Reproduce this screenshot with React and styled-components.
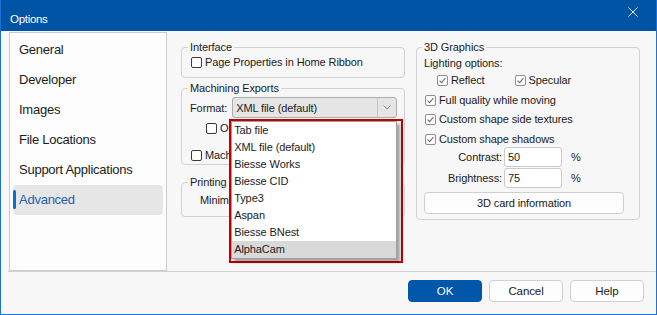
import styled, { createGlobalStyle } from "styled-components";

const GlobalStyle = createGlobalStyle`
  html, body {
    margin: 0;
    padding: 0;
    background: #f7f7f7;
  }
`;

const navItems = [
  "General",
  "Developer",
  "Images",
  "File Locations",
  "Support Applications",
  "Advanced",
];

const formats = [
  "Tab file",
  "XML file (default)",
  "Biesse Works",
  "Biesse CID",
  "Type3",
  "Aspan",
  "Biesse BNest",
  "AlphaCam",
];

function Check({ checked, muted }) {
  return (
    <Box muted={muted}>
      {checked && (
        <svg width="9" height="9" viewBox="0 0 9 9">
          <path d="M1.6 4.6 L3.6 6.6 L7.4 2.2" fill="none" stroke="#6e6e6e" strokeWidth="1.1" />
        </svg>
      )}
    </Box>
  );
}

function App() {
  return (
    <>
      <GlobalStyle />
      <Window>
        <TitleBar>
          <Title>Options</Title>
          <Close>
            <svg width="10" height="10" viewBox="0 0 10 10">
              <path d="M0.5 0.5 L9.5 9.5 M9.5 0.5 L0.5 9.5" stroke="#dce8f6" strokeWidth="1" />
            </svg>
          </Close>
        </TitleBar>

        <Body>
          <Nav>
            {navItems.map((item) => (
              <NavItem key={item} active={item === "Advanced"}>
                {item}
              </NavItem>
            ))}
          </Nav>

          <Content>
            <Column>
              <Group pad="1px 8px 8px">
                <Legend>Interface</Legend>
                <CheckRow indent={1}>
                  <Check />
                  Page Properties in Home Ribbon
                </CheckRow>
              </Group>

              <Group pad="2px 8px 2px" top={3}>
                <Legend>Machining Exports</Legend>
                <FormatRow>
                  <span>Format:</span>
                  <SelectWrap>
                    <Select>
                      <span>XML file (default)</span>
                      <Arrow>
                        <svg width="8" height="5" viewBox="0 0 8 5">
                          <path d="M0.5 0.5 L4 4 L7.5 0.5" fill="none" stroke="#8a8a8a" strokeWidth="1" />
                        </svg>
                      </Arrow>
                    </Select>
                    <Highlight>
                      <List>
                        {formats.map((f) => (
                          <ListItem key={f} hover={f === "AlphaCam"}>
                            {f}
                          </ListItem>
                        ))}
                      </List>
                    </Highlight>
                  </SelectWrap>
                </FormatRow>
                <CheckRow indent={16} top={3}>
                  <Check />
                  Output parts
                </CheckRow>
                <CheckRow indent={1} top={13}>
                  <Check />
                  Machining
                </CheckRow>
              </Group>

              <Group pad="4px 8px 9px" top={10}>
                <Legend>Printing</Legend>
                <CheckRow indent={10}>Minimum</CheckRow>
              </Group>
            </Column>

            <Column>
              <Group pad="2px 7px 5px">
                <Legend>3D Graphics</Legend>
                <CheckRow>Lighting options:</CheckRow>
                <Pair>
                  <CheckRow indent={13} top={3}>
                    <Check checked muted />
                    Reflect
                  </CheckRow>
                  <CheckRow indent={30} top={3}>
                    <Check checked muted />
                    Specular
                  </CheckRow>
                </Pair>
                <CheckRow indent={1} top={6}>
                  <Check checked muted />
                  Full quality while moving
                </CheckRow>
                <CheckRow indent={1} top={5}>
                  <Check checked muted />
                  Custom shape side textures
                </CheckRow>
                <CheckRow indent={1} top={6}>
                  <Check checked muted />
                  Custom shape shadows
                </CheckRow>
                <FieldRow top={1}>
                  <FieldLabel>Contrast:</FieldLabel>
                  <Input>50</Input>
                  <Unit>%</Unit>
                </FieldRow>
                <FieldRow top={1}>
                  <FieldLabel>Brightness:</FieldLabel>
                  <Input>75</Input>
                  <Unit>%</Unit>
                </FieldRow>
                <WideButton>3D card information</WideButton>
              </Group>
            </Column>
          </Content>
        </Body>

        <Footer>
          <Button primary>OK</Button>
          <Button>Cancel</Button>
          <Button>Help</Button>
        </Footer>
      </Window>
    </>
  );
}

export default App;

const Window = styled.div`
  width: 657px;
  height: 315px;
  box-sizing: border-box;
  border: 1px solid #1b72d4;
  border-top: none;
  background: #f7f7f7;
  display: flex;
  flex-direction: column;
  font-family: "Liberation Sans", Arial, sans-serif;
  font-size: 11px;
  letter-spacing: -0.1px;
  color: #1b1b1b;
  overflow: hidden;
`;

const TitleBar = styled.div`
  height: 31px;
  flex: none;
  box-sizing: border-box;
  background: #0054a6;
  display: flex;
  justify-content: space-between;
  padding: 0 18px 0 9px;
  color: #ffffff;
`;

const Title = styled.div`
  font-size: 11.5px;
  letter-spacing: -0.3px;
  line-height: 14px;
  margin-top: 12px;
`;

const Close = styled.div`
  margin-top: 7px;
  height: 10px;
`;

const Body = styled.div`
  height: 240px;
  flex: none;
  box-sizing: border-box;
  padding: 1px 0 0 8px;
  display: flex;
`;

const Nav = styled.div`
  width: 158px;
  height: 239px;
  box-sizing: border-box;
  border: 1px solid #cccccc;
  background: #fdfdfd;
  padding: 2px 3px;
  font-size: 13px;
  letter-spacing: -0.25px;
`;

const NavItem = styled.div`
  position: relative;
  height: 30px;
  line-height: 30px;
  padding-left: 6px;
  border-radius: 4px;
  color: ${({ active }) => (active ? "#1d5fb8" : "#1b1b1b")};
  background: ${({ active }) => (active ? "#e6e6e6" : "transparent")};

  &::before {
    content: "";
    display: ${({ active }) => (active ? "block" : "none")};
    position: absolute;
    left: 0;
    top: 5px;
    width: 3px;
    height: 19px;
    border-radius: 2px;
    background: #0f6cd6;
  }
`;

const Content = styled.div`
  margin: 8px 0 0 14px;
  display: flex;
  gap: 11px;
  align-items: flex-start;
`;

const Column = styled.div`
  width: 224px;
  display: flex;
  flex-direction: column;
`;

const Group = styled.fieldset`
  margin: ${({ top }) => top || 0}px 0 0;
  min-width: 0;
  border: 1px solid #d2d2d2;
  border-radius: 4px;
  padding: ${({ pad }) => pad};
  display: flex;
  flex-direction: column;
`;

const Legend = styled.legend`
  padding: 0 2px;
  margin-left: -2px;
  line-height: 14px;
`;

const CheckRow = styled.div`
  display: flex;
  align-items: center;
  gap: 3px;
  height: 14px;
  line-height: 14px;
  white-space: nowrap;
  margin-top: ${({ top }) => top || 0}px;
  padding-left: ${({ indent }) => indent || 0}px;
`;

const Box = styled.span`
  width: 11px;
  height: 11px;
  box-sizing: border-box;
  border: 1px solid ${({ muted }) => (muted ? "#8f8f8f" : "#3a3a3a")};
  border-radius: 2px;
  background: #ffffff;
  display: inline-flex;
  align-items: center;
  justify-content: center;
  flex: none;
`;

const Pair = styled.div`
  display: flex;
`;

const FormatRow = styled.div`
  display: flex;
  align-items: center;
  gap: 5px;
  height: 21px;
`;

const SelectWrap = styled.div`
  position: relative;
`;

const Select = styled.div`
  width: 165px;
  height: 21px;
  box-sizing: border-box;
  border: 1px solid #adadad;
  border-radius: 3px;
  background: #e5e5e5;
  display: flex;
  align-items: center;
  justify-content: space-between;
  padding-left: 3px;
`;

const Arrow = styled.span`
  width: 18px;
  height: 100%;
  border-left: 1px solid #c6c6c6;
  display: flex;
  align-items: center;
  justify-content: center;
`;

const Highlight = styled.div`
  position: absolute;
  left: -3px;
  top: 22px;
  width: 174px;
  height: 144px;
  box-sizing: border-box;
  border: 2px solid #c00000;
  background: #f7f7f7;
  padding: 0;
  z-index: 2;
`;

const List = styled.div`
  width: 166px;
  box-sizing: border-box;
  border: 1px solid #a0a0a0;
  background: #ffffff;
  box-shadow: 3px 3px 3px rgba(0, 0, 0, 0.35);
`;

const ListItem = styled.div`
  height: 17px;
  line-height: 17px;
  padding-left: 2px;
  background: ${({ hover }) => (hover ? "#d9d9d9" : "#ffffff")};
`;

const FieldRow = styled.div`
  display: flex;
  align-items: center;
  height: 20px;
  margin-top: ${({ top }) => top || 0}px;
`;

const FieldLabel = styled.span`
  width: 78px;
  text-align: right;
  margin-right: 2px;
`;

const Input = styled.div`
  width: 58px;
  height: 20px;
  box-sizing: border-box;
  border: 1px solid #cbcbcb;
  border-radius: 3px;
  background: #ffffff;
  line-height: 18px;
  padding-left: 3px;
`;

const Unit = styled.span`
  margin-left: 9px;
`;

const WideButton = styled.div`
  margin-top: 4px;
  width: 200px;
  height: 22px;
  box-sizing: border-box;
  border: 1px solid #cfcfcf;
  border-radius: 4px;
  background: #fdfdfd;
  display: flex;
  align-items: center;
  justify-content: center;
`;

const Footer = styled.div`
  flex: 1;
  margin-left: 7px;
  border-top: 1px solid #d2d2d2;
  display: flex;
  justify-content: flex-end;
  align-items: flex-start;
  gap: 7px;
  padding: 8px 12px 0 0;
`;

const Button = styled.div`
  width: 74px;
  height: 22px;
  box-sizing: border-box;
  border-radius: 4px;
  border: 1px solid ${({ primary }) => (primary ? "#0056a8" : "#d0d0d0")};
  background: ${({ primary }) => (primary ? "#0056a8" : "#fdfdfd")};
  color: ${({ primary }) => (primary ? "#ffffff" : "#1b1b1b")};
  display: flex;
  align-items: center;
  justify-content: center;
  font-size: 11.5px;
`;
